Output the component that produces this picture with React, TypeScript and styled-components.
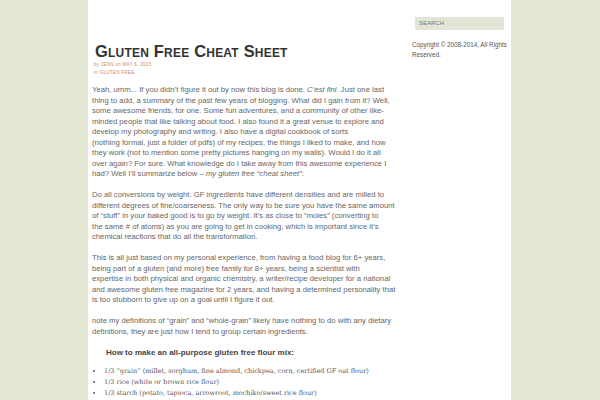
import * as React from "react";
import styled, { createGlobalStyle } from "styled-components";

const GlobalStyle = createGlobalStyle`
  html, body {
    margin: 0;
    padding: 0;
    background: #e2e6d3;
  }
  body {
    font-family: "Liberation Sans", Arial, sans-serif;
    overflow: hidden;
  }
`;

const SPage = styled.div`
  display: flex;
  width: 423px;
  min-height: 400px;
  margin-left: 88px;
  background: #ffffff;
  box-sizing: border-box;
`;

const SMain = styled.main`
  width: 323px;
  padding: 42px 0 0 4px;
  box-sizing: border-box;
`;

const STitle = styled.h1`
  margin: 0 0 0 3px;
  font-family: "Liberation Sans", Arial, sans-serif;
  font-variant: small-caps;
  font-weight: bold;
  font-size: 16.5px;
  line-height: 19px;
  letter-spacing: 0.2px;
  color: #333333;
`;

const SMeta = styled.div`
  margin: 0 0 0 2px;
  font-size: 4.5px;
  line-height: 8px;
  color: #d0866a;
  letter-spacing: 0.3px;
`;

const SText = styled.p`
  margin: 0 0 10.5px;
  font-size: 7.7px;
  line-height: 10.5px;
  color: #666666;
  white-space: nowrap;
`;

const SBody = styled.div`
  margin-top: 8px;
`;

const SSub = styled.p`
  margin: 0 0 8px 14px;
  font-size: 8px;
  line-height: 10px;
  font-weight: bold;
  color: #444444;
`;

const SBullets = styled.ul`
  margin: 0;
  padding-left: 12px;
  list-style: disc;
  color: #555555;
`;

const SBullet = styled.li`
  font-family: "DejaVu Serif", serif;
  font-size: 6.5px;
  line-height: 11px;
  white-space: nowrap;
`;

const SSide = styled.aside`
  width: 100px;
  padding: 17px 0 0 0;
  box-sizing: border-box;
`;

const SSearch = styled.div`
  width: 89px;
  height: 13px;
  margin-left: 4px;
  background: #e3e5d6;
  padding-left: 4px;
  box-sizing: border-box;
  font-size: 6px;
  line-height: 13px;
  color: #777777;
`;

const SCopy = styled.p`
  margin: 10px 0 0 1px;
  font-size: 6.3px;
  line-height: 9.5px;
  color: #555555;
  white-space: nowrap;
`;

interface ParaProps {
  lines: React.ReactNode[];
}

const Para = ({ lines }: ParaProps) => (
  <SText>
    {lines.map((l, i) => (
      <React.Fragment key={i}>
        {l}
        {i < lines.length - 1 && <br />}
      </React.Fragment>
    ))}
  </SText>
);

const p1: React.ReactNode[] = [
  <>
    Yeah, umm... If you didn’t figure it out by now this blog is done. <em>C’est fini.</em> Just one last
  </>,
  "thing to add, a summary of the past few years of blogging. What did I gain from it? Well,",
  "some awesome friends, for one. Some fun adventures, and a community of other like-",
  "minded people that like talking about food. I also found it a great venue to explore and",
  "develop my photography and writing. I also have a digital cookbook of sorts",
  "(nothing formal, just a folder of pdfs) of my recipes, the things I liked to make, and how",
  "they work (not to mention some pretty pictures hanging on my walls). Would I do it all",
  "over again? For sure. What knowledge do I take away from this awesome experience I",
  <>
    had? Well I’ll summarize below – <em>my gluten free “cheat sheet”</em>:
  </>,
];

const p2 = [
  "Do all conversions by weight. GF ingredients have different densities and are milled to",
  "different degrees of fine/coarseness. The only way to be sure you have the same amount",
  "of “stuff” in your baked good is to go by weight. It’s as close to “moles” (converting to",
  "the same # of atoms) as you are going to get in cooking, which is important since it’s",
  "chemical reactions that do all the transformation.",
];

const p3 = [
  "This is all just based on my personal experience, from having a food blog for 6+ years,",
  "being part of a gluten (and more) free family for 8+ years, being a scientist with",
  "expertise in both physical and organic chemistry, a writer/recipe developer for a national",
  "and awesome gluten free magazine for 2 years, and having a determined personality that",
  "is too stubborn to give up on a goal until I figure it out.",
];

const p4 = [
  "note my definitions of “grain” and “whole-grain” likely have nothing to do with any dietary",
  "definitions, they are just how I tend to group certain ingredients.",
];

const bullets = [
  "1/3 “grain” (millet, sorghum, fine almond, chickpea, corn, certified GF oat flour)",
  "1/3 rice (white or brown rice flour)",
  "1/3 starch (potato, tapioca, arrowroot, mochiko/sweet rice flour)",
];

export default function App() {
  return (
    <>
      <GlobalStyle />
      <SPage>
        <SMain>
          <STitle>Gluten Free Cheat Sheet</STitle>
          <SMeta>
            by JENN on MAY 6, 2015
            <br />
            in GLUTEN FREE
          </SMeta>
          <SBody>
            <Para lines={p1} />
            <Para lines={p2} />
            <Para lines={p3} />
            <Para lines={p4} />
            <SSub>How to make an all-purpose gluten free flour mix:</SSub>
            <SBullets>
              {bullets.map((b) => (
                <SBullet key={b}>{b}</SBullet>
              ))}
            </SBullets>
          </SBody>
        </SMain>
        <SSide>
          <SSearch>SEARCH</SSearch>
          <SCopy>
            Copyright © 2008-2014, All Rights
            <br />
            Reserved.
          </SCopy>
        </SSide>
      </SPage>
    </>
  );
}
